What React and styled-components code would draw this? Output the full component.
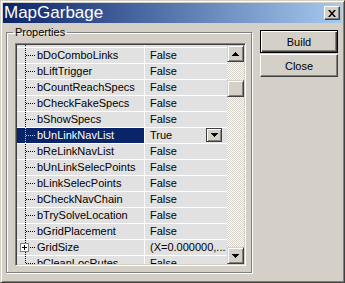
import React from 'react'
import styled, { createGlobalStyle, css } from 'styled-components'

// classic win2k palette
const FACE = '#D4D0C8'
const SHADOW = '#808080'
const DARK = '#404040'
const NAVY = '#0A246A'
const ROW_BG = '#E1E1E1'

const GlobalStyle = createGlobalStyle`
  html, body {
    margin: 0;
    padding: 0;
    background: ${FACE};
  }
  body {
    font-family: "Liberation Sans", Arial, sans-serif;
    font-size: 11px;
    color: #000;
  }
`

const Window = styled.div`
  box-sizing: border-box;
  width: 345px;
  height: 283px;
  padding: 2px;
  background: ${FACE};
  border: 1px solid;
  border-color: ${FACE} ${DARK} ${DARK} ${FACE};
  box-shadow: inset 1px 1px 0 #fff, inset -1px -1px 0 ${SHADOW};
  display: flex;
  flex-direction: column;
  overflow: hidden;
`

const TitleBar = styled.div`
  height: 20px;
  flex: none;
  display: flex;
  align-items: center;
  justify-content: space-between;
  padding: 0 2px 0 1px;
  background: linear-gradient(to right, ${NAVY}, #A6CAF0);
`

const Title = styled.span`
  color: #fff;
  font-size: 17px;
  line-height: 20px;
`

const raised = css`
  box-sizing: border-box;
  background: ${FACE};
  border: 1px solid;
  border-color: #fff ${DARK} ${DARK} #fff;
  box-shadow: inset -1px -1px 0 ${SHADOW};
  padding: 0;
  display: flex;
  align-items: center;
  justify-content: center;
`

const CloseBox = styled.div`
  ${raised}
  width: 16px;
  height: 14px;
`

const Body = styled.div`
  display: flex;
  align-items: flex-start;
`

const Group = styled.fieldset`
  margin: 3px 0 0 3px;
  padding: 4px 5px 6px 8px;
  border: 1px solid ${SHADOW};
  box-shadow: 1px 1px 0 #fff, inset 1px 1px 0 #fff;
  min-width: 0;
`

const Caption = styled.legend`
  padding: 0 2px;
  margin-left: -2px;
  font-size: 11px;
  line-height: 13px;
`

const List = styled.div`
  box-sizing: border-box;
  width: 231px;
  height: 223px;
  padding: 1px;
  border: 1px solid;
  border-color: ${SHADOW} #fff #fff ${SHADOW};
  box-shadow: inset 1px 1px 0 ${DARK}, inset -1px -1px 0 ${FACE};
  display: flex;
`

const Rows = styled.div`
  flex: 1;
  overflow: hidden;
  background: ${ROW_BG};
`

const Row = styled.div`
  box-sizing: border-box;
  height: ${p => p.$height || 16}px;
  display: flex;
  border-bottom: 1px solid #fff;
  line-height: 15px;
  white-space: nowrap;
`

const NameCell = styled.div`
  box-sizing: border-box;
  width: 128px;
  flex: none;
  display: flex;
  overflow: hidden;
  border-right: 1px solid #fff;
  background: ${p => (p.$selected ? NAVY : 'transparent')};
  color: ${p => (p.$selected ? '#fff' : '#000')};
`

const Tree = styled.span`
  width: 20px;
  flex: none;
  display: flex;
  align-items: center;
  background-image:
    repeating-linear-gradient(to bottom, ${p => p.$dot} 0 1px, transparent 1px 2px),
    repeating-linear-gradient(to right, ${p => p.$dot} 0 1px, transparent 1px 2px);
  background-size: 1px 100%, ${p => (p.$stub ? 0 : 10)}px 1px;
  background-position: 8px 0, 9px 7px;
  background-repeat: no-repeat;
`

const Expander = styled.span`
  box-sizing: border-box;
  width: 9px;
  height: 9px;
  margin: 0 0 1px 3px;
  border: 1px solid ${SHADOW};
  background: #fff;
  display: flex;
  align-items: center;
  justify-content: center;
`

const ValueCell = styled.div`
  flex: 1;
  display: flex;
  align-items: center;
  justify-content: space-between;
  padding: 0 5px 0 5px;
  overflow: hidden;
`

const DropButton = styled.div`
  box-sizing: border-box;
  width: 16px;
  height: 14px;
  margin-top: -1px;
  background: ${FACE};
  border: 1px solid ${DARK};
  box-shadow: inset 1px 1px 0 #fff, inset -1px -1px 0 ${SHADOW};
  display: flex;
  align-items: center;
  justify-content: center;
`

const ScrollBar = styled.div`
  width: 17px;
  flex: none;
  display: flex;
  flex-direction: column;
  background-color: ${FACE};
  background-image: conic-gradient(#fff 25%, ${FACE} 0 50%, #fff 0 75%, ${FACE} 0);
  background-size: 2px 2px;
`

const ScrollButton = styled.div`
  ${raised}
  width: 17px;
  height: 17px;
  flex: none;
  border-color: ${FACE} ${DARK} ${DARK} ${FACE};
  box-shadow: inset 1px 1px 0 #fff, inset -1px -1px 0 ${SHADOW};
`

const Track = styled.div`
  flex: 1;
`

const Thumb = styled.div`
  ${raised}
  height: 17px;
  margin-top: 18px;
  border-color: ${FACE} ${DARK} ${DARK} ${FACE};
  box-shadow: inset 1px 1px 0 #fff, inset -1px -1px 0 ${SHADOW};
`

const Side = styled.div`
  display: flex;
  flex-direction: column;
  gap: 1px;
  margin: 7px 0 0 8px;
`

const Button = styled.button`
  box-sizing: border-box;
  width: 78px;
  height: 23px;
  padding: 0;
  font: 11px "Liberation Sans", Arial, sans-serif;
  color: #000;
  background: ${FACE};
  border: 1px solid;
  border-color: #fff ${DARK} ${DARK} #fff;
  box-shadow: inset -1px -1px 0 ${SHADOW};
  ${p =>
    p.$default &&
    css`
      border-color: #000;
      box-shadow: inset 1px 1px 0 #fff, inset -1px -1px 0 ${DARK}, inset -2px -2px 0 ${SHADOW};
    `}
`

const Arrow = ({ down }) => (
  <svg width="7" height="4" viewBox="0 0 7 4">
    <path d={down ? 'M0 0h7L3.5 4z' : 'M0 4h7L3.5 0z'} fill="#000" shapeRendering="crispEdges" />
  </svg>
)

const CrossIcon = () => (
  <svg width="8" height="7" viewBox="0 0 8 7">
    <path d="M0 0h2l2 2.5L6 0h2L5 3.5 8 7H6L4 4.5 2 7H0l3-3.5z" fill="#000" />
  </svg>
)

const PlusIcon = () => (
  <svg width="5" height="5" viewBox="0 0 5 5">
    <path d="M0 2h5v1H0zM2 0h1v5H2z" fill="#000" shapeRendering="crispEdges" />
  </svg>
)

const properties = [
  { name: 'bDoComboLinks', value: 'False' },
  { name: 'bLiftTrigger', value: 'False' },
  { name: 'bCountReachSpecs', value: 'False' },
  { name: 'bCheckFakeSpecs', value: 'False' },
  { name: 'bShowSpecs', value: 'False' },
  { name: 'bUnLinkNavList', value: 'True', selected: true },
  { name: 'bReLinkNavList', value: 'False' },
  { name: 'bUnLinkSelecPoints', value: 'False' },
  { name: 'bLinkSelecPoints', value: 'False' },
  { name: 'bCheckNavChain', value: 'False' },
  { name: 'bTrySolveLocation', value: 'False' },
  { name: 'bGridPlacement', value: 'False' },
  { name: 'GridSize', value: '(X=0.000000,...', expandable: true },
  { name: 'bCleanLocRutes', value: 'False' },
]

export default function App() {
  return (
    <>
      <GlobalStyle />
      <Window>
        <TitleBar>
          <Title>MapGarbage</Title>
          <CloseBox>
            <CrossIcon />
          </CloseBox>
        </TitleBar>
        <Body>
          <Group>
            <Caption>Properties</Caption>
            <List>
              <Rows>
                {/* list is scrolled: only the tail of the previous row shows */}
                <Row $height={3}>
                  <NameCell>
                    <Tree $dot="#000" $stub />
                  </NameCell>
                  <ValueCell />
                </Row>
                {properties.map(p => (
                  <Row key={p.name}>
                    <NameCell $selected={p.selected}>
                      <Tree $dot={p.selected ? '#C0C0C0' : '#000'}>
                        {p.expandable && (
                          <Expander>
                            <PlusIcon />
                          </Expander>
                        )}
                      </Tree>
                      <span>{p.name}</span>
                    </NameCell>
                    <ValueCell>
                      <span>{p.value}</span>
                      {p.selected && (
                        <DropButton>
                          <Arrow down />
                        </DropButton>
                      )}
                    </ValueCell>
                  </Row>
                ))}
              </Rows>
              <ScrollBar>
                <ScrollButton>
                  <Arrow />
                </ScrollButton>
                <Track>
                  <Thumb />
                </Track>
                <ScrollButton>
                  <Arrow down />
                </ScrollButton>
              </ScrollBar>
            </List>
          </Group>
          <Side>
            <Button $default>Build</Button>
            <Button>Close</Button>
          </Side>
        </Body>
      </Window>
    </>
  )
}
